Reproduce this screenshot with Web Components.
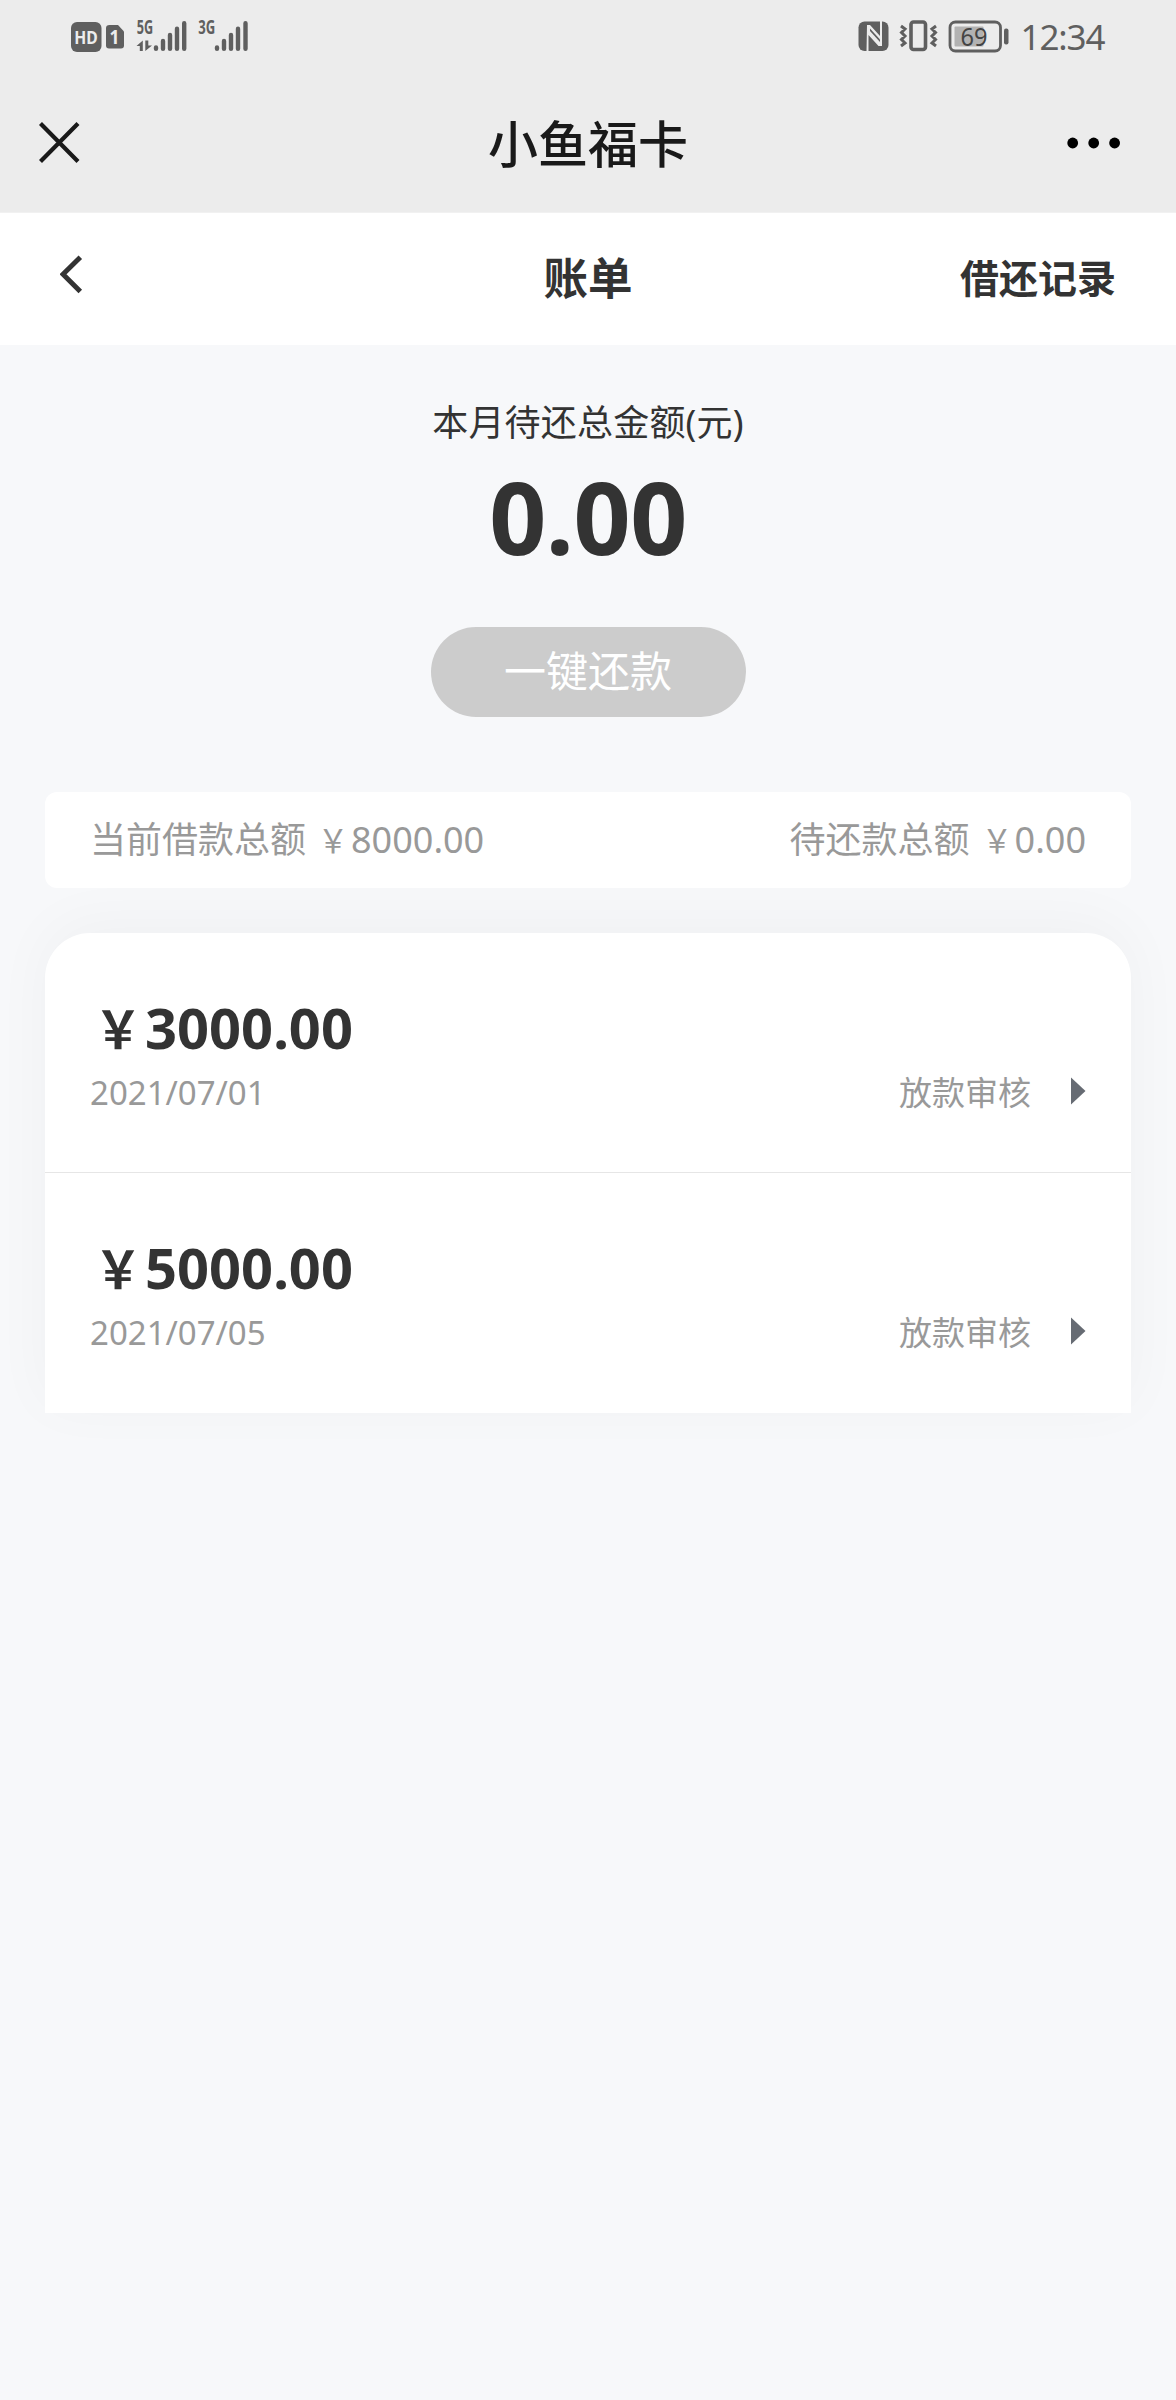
<!DOCTYPE html>
<html lang="zh-CN">
<head>
<meta charset="utf-8">
<title>账单</title>
<style>
body{margin:0;background:#f7f8fa;font-family:"Noto Sans","Noto Sans CJK SC",sans-serif;color:#333}
</style>
</head>
<body>
<bill-app></bill-app>
<script>
function define(name, html){
  customElements.define(name, class extends HTMLElement{
    constructor(){
      super();
      const t=document.createElement('template');
      t.innerHTML=html;
      this.attachShadow({mode:'open'}).appendChild(t.content.cloneNode(true));
    }
  });
}

define('status-bar', `
<style>
:host{display:flex;justify-content:space-between;height:72px;padding:0 66px;background:#ececec}
svg{display:block}
text{font-family:"Noto Sans",sans-serif}
</style>
<svg width="190" height="72" viewBox="66 0 190 72" fill="#5f5f5f">
  <rect x="71" y="22" width="30.5" height="30" rx="6"/>
  <text x="74.3" y="44" font-size="18.500" font-weight="700" fill="#ececec" textLength="23.5" lengthAdjust="spacingAndGlyphs">HD</text>
  <path d="M109.500 25H118L124 31.500V45.500Q124 48.500 121 48.500H109Q106 48.500 106 45.500V28Q106 25 109.500 25Z"/>
  <text x="109.500" y="44.300" font-size="20" font-weight="700" fill="#ececec" textLength="10" lengthAdjust="spacingAndGlyphs">1</text>
  <text x="136.800" y="34.200" font-size="19" font-weight="700" textLength="16.400" lengthAdjust="spacingAndGlyphs">5G</text>
  <text x="198.300" y="34.200" font-size="19" font-weight="700" textLength="17" lengthAdjust="spacingAndGlyphs">3G</text>
  <path d="M136.500 46L142.800 40.500V51H139.800V46ZM145.300 40.500H148.300V45.500H152L145.300 51Z"/>
  <g stroke="#5f5f5f" stroke-width="4.400" stroke-linecap="round">
    <path d="M156 47.500V48.700M163 41V48.700M170 35V48.700M177 28.700V48.700M184.200 23.200V48.700"/>
    <path d="M217 47.500V48.700M224 41V48.700M231 35V48.700M238 28.700V48.700M245.500 23.200V48.700"/>
  </g>
</svg>
<svg width="256" height="72" viewBox="854 0 256 72" fill="#5f5f5f">
  <rect x="858.500" y="21.500" width="30" height="29.500" rx="6"/>
  <path d="M866.500 51.500L867 25L870 25L880 36V21H882V46L878.500 46L868.500 35V51.500Z" fill="#ececec"/>
  <path d="M870 28.500L880 39.500V42L870 31Z" fill="#5f5f5f"/>
  <rect x="911" y="22" width="14.500" height="27.500" rx="2.500" fill="none" stroke="#5f5f5f" stroke-width="3.600"/>
  <path d="M901 26L905 29L901.500 32.500L905 36L901.500 39.500L905 43L901 46M936 26L932 29L935.500 32.500L932 36L935.500 39.500L932 43L936 46" fill="none" stroke="#5f5f5f" stroke-width="3"/>
  <rect x="950" y="22" width="50.500" height="29" rx="5.500" fill="none" stroke="#5f5f5f" stroke-width="2.800"/>
  <rect x="954.500" y="26.500" width="29" height="20" rx="1" fill="#b2b2b2"/>
  <rect x="1004" y="28.500" width="4.500" height="16" rx="2"/>
  <text x="960.500" y="46" font-size="26" fill="#444" textLength="27" lengthAdjust="spacingAndGlyphs">69</text>
  <text x="1020.500" y="50" font-size="35" textLength="85" lengthAdjust="spacing">12:34</text>
</svg>`);

define('app-bar', `
<style>
:host{display:grid;grid-template-columns:1fr auto 1fr;align-items:center;height:141px;box-sizing:border-box;padding:8px 54px 4px 38px;background:#ececec;color:#191919;border-bottom:1px solid #f1f1f1}
h1{margin:0 -8px 0 8px;font-size:50px;line-height:60px;font-weight:500}
svg{display:block;margin-top:-2px}
.end{justify-self:end}
</style>
<svg width="44" height="44" viewBox="38 121 44 44"><path d="M40.500 123.500L78 161.500M78 123.500L40.500 161.500" stroke="#191919" stroke-width="4.200"/></svg>
<h1><slot></slot></h1>
<svg class="end" width="56" height="20" viewBox="1066 132.500 56 20"><circle cx="1072.700" cy="142.500" r="5.400"/><circle cx="1093.700" cy="142.500" r="5.400"/><circle cx="1114.600" cy="142.500" r="5.400"/></svg>`);

define('page-nav', `
<style>
:host{display:grid;grid-template-columns:1fr auto 1fr;align-items:center;height:132px;padding:0 60px;background:#fff;color:#333}
h2{margin:-2px 0 0;font-size:44.500px;line-height:60px;font-weight:700}
a{justify-self:end;font-size:39px;line-height:60px;font-weight:700;margin-top:-2px}
svg{display:block;margin-top:-10px}
</style>
<svg width="24" height="40" viewBox="60 254 24 40"><path d="M80.300 257.300L63 274.300L80.300 291.500" fill="none" stroke="#333" stroke-width="5"/></svg>
<h2><slot></slot></h2>
<a><slot name="action"></slot></a>`);

define('due-total', `
<style>
:host{display:flex;flex-direction:column;align-items:center;padding-top:51px;height:396px;box-sizing:content-box}
.label{font-size:36px;line-height:54px;letter-spacing:.2px}
.amount{font-size:100px;line-height:120px;font-weight:700;margin-top:6px;letter-spacing:-.5px}
button{margin:51px 0 0;width:315px;height:90px;border:0;border-radius:45px;background:#ccc;color:#fff;font:400 42px/88px "Noto Sans","Noto Sans CJK SC",sans-serif;padding:0 0 2px}
</style>
<div class="label"><slot name="label"></slot></div>
<div class="amount"><slot></slot></div>
<button><slot name="button"></slot></button>`);

define('yuan-sign', `
<style>:host{display:inline-block;width:var(--yuan-width,1em);white-space:nowrap}span{display:inline-block;transform:scale(.85,.93);transform-origin:50% 77%}</style><span>￥</span>`);

define('summary-bar', `
<style>
:host{display:flex;justify-content:space-between;align-items:center;position:relative;z-index:1;margin:0 45px;height:96px;box-sizing:border-box;padding:0 45px;border-radius:12px;background:#fff;color:#999;font-size:36px;line-height:54px}
</style>
<slot></slot>`);

define('summary-item', `
<style>:host{display:flex;gap:9px}</style>
<span><slot name="name"></slot></span><span><slot></slot></span>`);

define('bill-list', `
<style>
:host{display:block;margin:45px 45px 0;background:#fff;border-radius:45px 45px 0 0;box-shadow:0 -10px 60px rgba(0,0,0,.035)}
</style>
<slot></slot>`);

define('bill-row', `
<style>
:host{display:flex;flex-direction:column;height:240px;box-sizing:border-box;padding:59px 45px 0;border-bottom:1px solid transparent}
:host([divided]){border-bottom-color:#e6e6e6}
.amount{--yuan-width:55px;height:70px;font-size:56px;line-height:70px;font-weight:700;color:#333}
.meta{display:flex;justify-content:space-between;align-items:center;height:60px;margin-top:1px;color:#999;font-size:33px;line-height:60px}
.state{display:flex;align-items:center;gap:39px}
svg{display:block;margin-top:-4px}
</style>
<div class="amount"><slot></slot></div>
<div class="meta"><span><slot name="date"></slot></span>
<span class="state"><span><slot name="state"></slot></span>
<svg width="16" height="28" viewBox="0 0 16 28"><path d="M1 .500L15.500 14L1 27.500Z" fill="#666b73"/></svg></span></div>`);

define('bill-app', `
<style>:host{display:block;width:1176px;height:2400px;overflow:hidden;background:#f7f8fa}</style>
<status-bar></status-bar>
<app-bar>小鱼福卡</app-bar>
<page-nav>账单<span slot="action">借还记录</span></page-nav>
<due-total><span slot="label">本月待还总金额(元)</span>0.00<span slot="button">一键还款</span></due-total>
<summary-bar>
<summary-item><span slot="name">当前借款总额</span><yuan-sign></yuan-sign>8000.00</summary-item>
<summary-item><span slot="name">待还款总额</span><yuan-sign></yuan-sign>0.00</summary-item>
</summary-bar>
<bill-list>
<bill-row divided><yuan-sign></yuan-sign>3000.00<span slot="date">2021/07/01</span><span slot="state">放款审核</span></bill-row>
<bill-row><yuan-sign></yuan-sign>5000.00<span slot="date">2021/07/05</span><span slot="state">放款审核</span></bill-row>
</bill-list>`);
</script>
</body>
</html>
